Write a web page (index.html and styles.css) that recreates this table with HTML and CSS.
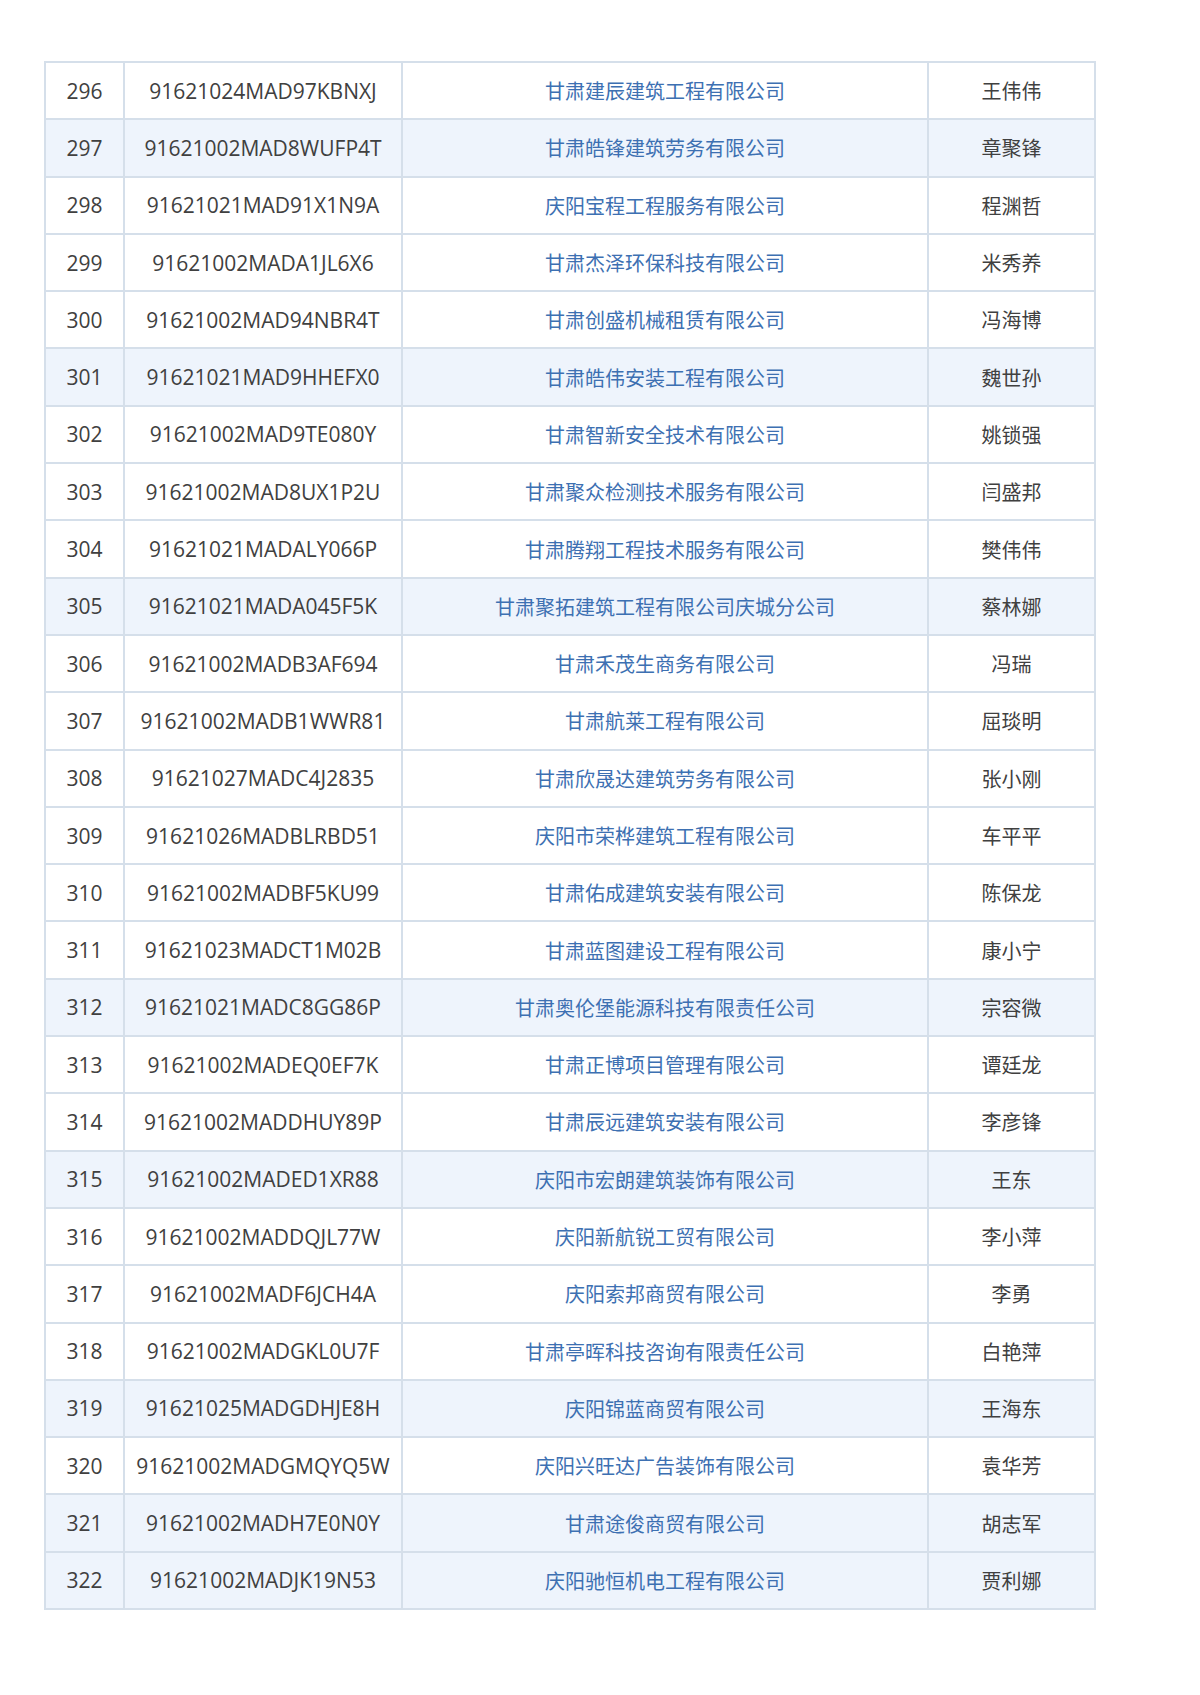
FILE: index.html
```html
<!DOCTYPE html>
<html lang="zh-CN">
<head>
<meta charset="utf-8">
<title>名单</title>
<link rel="stylesheet" href="styles.css">
</head>
<body>
<div class="page">
<table class="list">
<colgroup><col class="c-no"><col class="c-code"><col class="c-name"><col class="c-person"></colgroup>
<tbody>
<tr><td>296</td><td class="cd">91621024MAD97KBNXJ</td><td class="co">甘肃建辰建筑工程有限公司</td><td class="pn">王伟伟</td></tr>
<tr class="alt"><td>297</td><td class="cd">91621002MAD8WUFP4T</td><td class="co">甘肃皓锋建筑劳务有限公司</td><td class="pn">章聚锋</td></tr>
<tr><td>298</td><td class="cd">91621021MAD91X1N9A</td><td class="co">庆阳宝程工程服务有限公司</td><td class="pn">程渊哲</td></tr>
<tr><td>299</td><td class="cd">91621002MADA1JL6X6</td><td class="co">甘肃杰泽环保科技有限公司</td><td class="pn">米秀养</td></tr>
<tr><td>300</td><td class="cd">91621002MAD94NBR4T</td><td class="co">甘肃创盛机械租赁有限公司</td><td class="pn">冯海博</td></tr>
<tr class="alt"><td>301</td><td class="cd">91621021MAD9HHEFX0</td><td class="co">甘肃皓伟安装工程有限公司</td><td class="pn">魏世孙</td></tr>
<tr><td>302</td><td class="cd">91621002MAD9TE080Y</td><td class="co">甘肃智新安全技术有限公司</td><td class="pn">姚锁强</td></tr>
<tr><td>303</td><td class="cd">91621002MAD8UX1P2U</td><td class="co">甘肃聚众检测技术服务有限公司</td><td class="pn">闫盛邦</td></tr>
<tr><td>304</td><td class="cd">91621021MADALY066P</td><td class="co">甘肃腾翔工程技术服务有限公司</td><td class="pn">樊伟伟</td></tr>
<tr class="alt"><td>305</td><td class="cd">91621021MADA045F5K</td><td class="co">甘肃聚拓建筑工程有限公司庆城分公司</td><td class="pn">蔡林娜</td></tr>
<tr><td>306</td><td class="cd">91621002MADB3AF694</td><td class="co">甘肃禾茂生商务有限公司</td><td class="pn">冯瑞</td></tr>
<tr><td>307</td><td class="cd">91621002MADB1WWR81</td><td class="co">甘肃航莱工程有限公司</td><td class="pn">屈琰明</td></tr>
<tr><td>308</td><td class="cd">91621027MADC4J2835</td><td class="co">甘肃欣晟达建筑劳务有限公司</td><td class="pn">张小刚</td></tr>
<tr><td>309</td><td class="cd">91621026MADBLRBD51</td><td class="co">庆阳市荣桦建筑工程有限公司</td><td class="pn">车平平</td></tr>
<tr><td>310</td><td class="cd">91621002MADBF5KU99</td><td class="co">甘肃佑成建筑安装有限公司</td><td class="pn">陈保龙</td></tr>
<tr><td>311</td><td class="cd">91621023MADCT1M02B</td><td class="co">甘肃蓝图建设工程有限公司</td><td class="pn">康小宁</td></tr>
<tr class="alt"><td>312</td><td class="cd">91621021MADC8GG86P</td><td class="co">甘肃奥伦堡能源科技有限责任公司</td><td class="pn">宗容微</td></tr>
<tr><td>313</td><td class="cd">91621002MADEQ0EF7K</td><td class="co">甘肃正博项目管理有限公司</td><td class="pn">谭廷龙</td></tr>
<tr><td>314</td><td class="cd">91621002MADDHUY89P</td><td class="co">甘肃辰远建筑安装有限公司</td><td class="pn">李彦锋</td></tr>
<tr class="alt"><td>315</td><td class="cd">91621002MADED1XR88</td><td class="co">庆阳市宏朗建筑装饰有限公司</td><td class="pn">王东</td></tr>
<tr><td>316</td><td class="cd">91621002MADDQJL77W</td><td class="co">庆阳新航锐工贸有限公司</td><td class="pn">李小萍</td></tr>
<tr><td>317</td><td class="cd">91621002MADF6JCH4A</td><td class="co">庆阳索邦商贸有限公司</td><td class="pn">李勇</td></tr>
<tr><td>318</td><td class="cd">91621002MADGKL0U7F</td><td class="co">甘肃亭晖科技咨询有限责任公司</td><td class="pn">白艳萍</td></tr>
<tr class="alt"><td>319</td><td class="cd">91621025MADGDHJE8H</td><td class="co">庆阳锦蓝商贸有限公司</td><td class="pn">王海东</td></tr>
<tr><td>320</td><td class="cd">91621002MADGMQYQ5W</td><td class="co">庆阳兴旺达广告装饰有限公司</td><td class="pn">袁华芳</td></tr>
<tr class="alt"><td>321</td><td class="cd">91621002MADH7E0N0Y</td><td class="co">甘肃途俊商贸有限公司</td><td class="pn">胡志军</td></tr>
<tr class="alt"><td>322</td><td class="cd">91621002MADJK19N53</td><td class="co">庆阳驰恒机电工程有限公司</td><td class="pn">贾利娜</td></tr>
</tbody>
</table>
</div>
</body>
</html>
```

FILE: styles.css
```css
html, body {
  margin: 0;
  padding: 0;
  background: #ffffff;
}

.page {
  padding: 61px 0 0 44px;
}

.list {
  border-collapse: collapse;
  table-layout: fixed;
  width: 1052px;
  font-family: "Open Sans", "Noto Sans CJK SC", sans-serif;
  font-size: 21px;
  color: #404040;
}

.c-no { width: 79px; }
.c-code { width: 278px; }
.c-name { width: 526px; }
.c-person { width: 167px; }

.list td {
  border: 2px solid #d5dfea;
  height: 55.3px;
  padding: 0;
  text-align: center;
  vertical-align: middle;
  white-space: nowrap;
}

.list tr.alt td {
  background: #eef4fc;
}

.list td.cd {
  font-size: 21px;
}

.list td.co {
  font-family: "Noto Sans CJK SC", sans-serif;
  font-size: 20px;
  color: #3d70b2;
}

.list td.pn {
  font-family: "Noto Sans CJK SC", sans-serif;
  font-size: 20px;
  color: #404040;
}
```
